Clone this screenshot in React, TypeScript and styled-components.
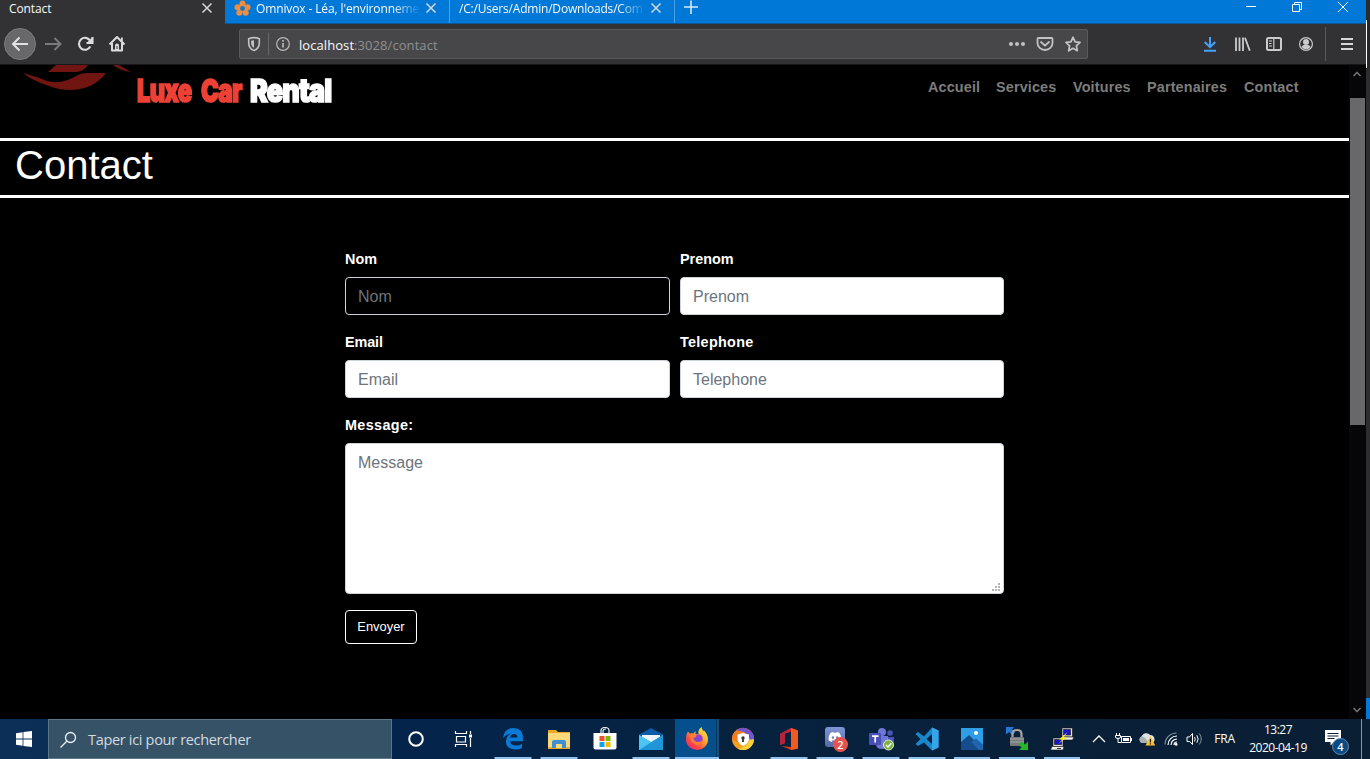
import React from "react";
import styled, { createGlobalStyle } from "styled-components";
import { FaDiscord } from "react-icons/fa";

const ui = `"Open Sans", "Noto Sans", sans-serif`;
const arial = `"Liberation Sans", Arial, sans-serif`;

const Global = createGlobalStyle`
  * { box-sizing: border-box; }
  body { margin: 0; background: #000; overflow: hidden; }
  svg { display: block; flex: none; }
`;

const Desktop = styled.div`
  width: 1370px;
  height: 759px;
  display: flex;
  flex-direction: column;
  overflow: hidden;
  background: #000;
`;

const Upper = styled.div`
  display: flex;
  height: 719px;
`;

const BrowserWindow = styled.div`
  width: 1366px;
  display: flex;
  flex-direction: column;
`;

const Behind = styled.div`
  width: 4px;
  display: flex;
  flex-direction: column;
  background: #2d2d2e;
`;

const BehindPart = styled.div<{ $h: number; $bg: string; $line?: boolean }>`
  height: ${(p) => p.$h}px;
  background: ${(p) => p.$bg};
  border-left: ${(p) => (p.$line ? "1px solid #fff" : "0")};
`;

/* ---------- Tabs ---------- */

const TabBar = styled.div`
  height: 24px;
  display: flex;
  background: #0078d7;
  border-bottom: 1px solid #0a5796;
`;

const Tab = styled.div<{ $active?: boolean }>`
  width: 225px;
  height: ${(p) => (p.$active ? 24 : 23)}px;
  display: flex;
  align-items: flex-start;
  padding: 0 12px 0 9px;
  background: ${(p) => (p.$active ? "#323234" : "transparent")};
  border-right: ${(p) => (p.$active ? "0" : "1px solid #4da0e3")};
`;

const TabLabel = styled.span<{ $fade?: boolean; $spacing?: number; $gap?: number }>`
  flex: 1;
  margin-left: ${(p) => p.$gap ?? 0}px;
  white-space: nowrap;
  font: 12px/18px ${ui};
  letter-spacing: ${(p) => p.$spacing ?? 0}px;
  color: #f9f9fa;
  mask-image: ${(p) => (p.$fade ? "linear-gradient(to left, transparent, #000 28px)" : "none")};
`;

const TabClose = styled.svg`
  margin: 2px 0 0 4px;
`;

const NewTab = styled.svg`
  margin: 0 0 0 9px;
`;

const WindowButtons = styled.div`
  margin-left: auto;
  display: flex;
`;

/* ---------- Toolbar ---------- */

const Toolbar = styled.div`
  height: 41px;
  display: flex;
  align-items: center;
  background: #323234;
  border-bottom: 1px solid #18181a;
`;

const NavButtons = styled.div`
  width: 239px;
  display: flex;
`;

const UrlBar = styled.div`
  width: 849px;
  height: 30px;
  display: flex;
  align-items: center;
  background: #474749;
  border: 1px solid #5a5a5c;
  border-radius: 2px;
`;

const UrlText = styled.span`
  flex: 1;
  font: 13px/20px ${ui};
  letter-spacing: 0.07px;
  padding-top: 1px;
  color: #8f8f92;
  b { font-weight: 400; color: #f9f9fa; }
`;

const ToolIcons = styled.div`
  margin-left: auto;
  display: flex;
`;

/* ---------- Page ---------- */

const Viewport = styled.div`
  flex: 1;
  display: flex;
`;

const Page = styled.main`
  width: 1349px;
  height: 654px;
  background: #000;
  overflow: hidden;
`;

const Header = styled.header`
  height: 73px;
  display: flex;
`;

const Brand = styled.div`
  display: flex;
  padding-top: 6px;
`;

const BrandWord = styled.span<{ $w: number; $scale: number; $color: string }>`
  width: ${(p) => p.$w}px;
  height: 40px;
  font: 900 32px/40px Inter, sans-serif;
  letter-spacing: -1px;
  white-space: nowrap;
  color: ${(p) => p.$color};
  -webkit-text-stroke: 1.6px ${(p) => p.$color};
  transform: scaleX(${(p) => p.$scale});
  transform-origin: 0 0;
`;

const Menu = styled.nav`
  margin-left: auto;
  padding: 13px 51px 0 0;
  display: flex;
  gap: 16px;
`;

const MenuLink = styled.a<{ $w: number }>`
  width: ${(p) => p.$w}px;
  white-space: nowrap;
  font: bold 14.4px/18px ${arial};
  letter-spacing: 0.15px;
  color: #7d7d7d;
`;

const Title = styled.h1`
  height: 60px;
  margin: 0;
  padding: 0 15px;
  border: solid #fff;
  border-width: 3px 0;
  font: 400 40px/48px ${arial};
  color: #fff;
`;

const Form = styled.form`
  width: 659px;
  margin: 50px 0 0 345px;
  display: flex;
  flex-direction: column;
  align-items: flex-start;
`;

const Row = styled.div`
  width: 100%;
  height: 83px;
  display: grid;
  grid-template-columns: 325px 324px;
  column-gap: 10px;
`;

const Field = styled.label`
  display: flex;
  flex-direction: column;
  width: 100%;
`;

const FieldLabel = styled.span<{ $spacing?: number }>`
  height: 29px;
  font: bold 14.4px/22px ${arial};
  letter-spacing: ${(p) => p.$spacing ?? 0}px;
  color: #fff;
`;

const Input = styled.input<{ $dark?: boolean }>`
  width: 100%;
  height: 38px;
  padding: 8px 12px 6px;
  font: 16px/24px ${arial};
  color: ${(p) => (p.$dark ? "#fff" : "#495057")};
  background: ${(p) => (p.$dark ? "#000" : "#fff")};
  border: 1px solid #ced4da;
  border-radius: 4px;
  outline: 0;
  &::placeholder { color: #6c757d; opacity: 1; }
`;

const AreaWrap = styled.div`
  position: relative;
  height: 151px;
`;

const Area = styled.textarea`
  display: block;
  width: 100%;
  height: 151px;
  padding: 7px 12px;
  resize: none;
  font: 16px/24px ${arial};
  background: #fff;
  border: 1px solid #ced4da;
  border-radius: 4px;
  outline: 0;
  &::placeholder { color: #6c757d; opacity: 1; }
`;

const Grip = styled.svg`
  position: absolute;
  right: 4px;
  bottom: 3px;
`;

const Submit = styled.button`
  width: 72px;
  height: 34px;
  margin-top: 16px;
  padding: 0 0 1px;
  font: 12.9px/20px ${arial};
  color: #fff;
  background: #000;
  border: 1px solid #fff;
  border-radius: 4px;
`;

const Scrollbar = styled.div`
  width: 17px;
  display: flex;
  flex-direction: column;
  align-items: center;
  background: #060608;
`;

const Thumb = styled.div`
  width: 15px;
  height: 327px;
  margin: 16px 0 auto;
  background: #68686a;
`;

/* ---------- Taskbar ---------- */

const Taskbar = styled.footer`
  height: 40px;
  display: flex;
  background: linear-gradient(90deg, #0b2f57 0, #04244c 400px, #06223f 720px, #09203a 1000px, #0a1f34 1366px);
`;

const StartButton = styled.div`
  width: 48px;
  display: grid;
  place-items: center;
`;

const SearchBox = styled.div`
  width: 344px;
  display: flex;
  align-items: center;
  gap: 11px;
  padding: 1px 0 0 10px;
  background: #355267;
  border: 1px solid #5d7688;
  font: 14.5px/20px ${ui};
  letter-spacing: -0.32px;
  color: #d3dbe1;
`;

const AppButton = styled.div<{ $w?: number; $active?: boolean }>`
  position: relative;
  width: ${(p) => p.$w ?? 46}px;
  display: grid;
  place-items: center;
  background: ${(p) =>
    p.$active
      ? "linear-gradient(90deg, transparent 1px, #064f8d 1px 42px, #053459 42px 43px, #174f7f 43px 45px, transparent 45px)"
      : "none"};
`;

const Underline = styled.div<{ $w?: number }>`
  position: absolute;
  bottom: 0;
  width: ${(p) => p.$w ?? 37}px;
  height: 2px;
  left: 50%;
  transform: translateX(-50%);
  background: #8fc2ee;
`;

const AppBadge = styled.span`
  position: absolute;
  left: 21px;
  top: 18px;
  width: 15px;
  height: 15px;
  border-radius: 50%;
  background: #e5534f;
  color: #fff;
  text-align: center;
  font: 600 11px/15px ${ui};
`;

const DiscordTile = styled.div`
  width: 20px;
  height: 20px;
  margin-bottom: 4px;
  display: grid;
  place-items: center;
  border-radius: 3px;
  color: #fff;
  background: linear-gradient(#7f95d5, #586aa5);
`;

const TrayCell = styled.div<{ $w: number }>`
  width: ${(p) => p.$w}px;
  display: grid;
  place-items: center;
  font: 12px/18px ${ui};
  letter-spacing: -0.25px;
  color: #fff;
`;

const Clock = styled.div`
  width: 70px;
  display: flex;
  flex-direction: column;
  align-items: center;
  padding-top: 2px;
  font: 12px/18px ${ui};
  letter-spacing: -0.5px;
  white-space: nowrap;
  color: #fff;
`;

const Notifications = styled.div`
  position: relative;
  width: 49px;
  padding: 11px 0 0 12px;
  border-right: 1px solid #8793a0;
`;

const Count = styled.span`
  position: absolute;
  left: 19px;
  top: 19px;
  width: 17px;
  height: 17px;
  border: 1px solid #5e8ab0;
  border-radius: 50%;
  background: #0a4b83;
  color: #fff;
  text-align: center;
  font: 600 11px/15px ${ui};
`;

const Cross = () => (
  <TabClose width="12" height="12" viewBox="0 0 12 12" stroke="#d8d8da" strokeWidth="1.5" fill="none">
    <path d="M1.5 1.5l9 9M10.5 1.5l-9 9" />
  </TabClose>
);

const Icon = ({ w = 28, h = 28, children }: { w?: number; h?: number; children: React.ReactNode }) => (
  <svg width={w} height={h} viewBox={`0 0 ${w} ${h}`} fill="none">{children}</svg>
);

const Tabs = () => (
  <TabBar>
    <Tab $active>
      <TabLabel $spacing={-0.1}>Contact</TabLabel>
      <Cross />
    </Tab>
    <Tab>
      <Icon w={17} h={18}>
        <g fill="#f28c3a">
          <circle cx="8.500" cy="3.600" r="3" />
          <circle cx="3.500" cy="7.200" r="3" />
          <circle cx="13.500" cy="7.200" r="3" />
          <circle cx="5.300" cy="12.700" r="3" />
          <circle cx="11.700" cy="12.700" r="3" />
        </g>
        <circle cx="8.500" cy="8.500" r="3.200" fill="#1976bd" stroke="#e0904f" strokeWidth="1.500" />
      </Icon>
      <TabLabel $fade $spacing={-0.12} $gap={5}>Omnivox - Léa, l'environneme</TabLabel>
      <Cross />
    </Tab>
    <Tab>
      <TabLabel $fade $spacing={-0.2}>/C:/Users/Admin/Downloads/Com</TabLabel>
      <Cross />
    </Tab>
    <NewTab width="14" height="15" viewBox="0 0 14 15" stroke="#d5e9f9" strokeWidth="1.6">
      <path d="M7 .5v13.500M0 7h14" />
    </NewTab>
    <WindowButtons>
      <Icon w={46} h={20}><path d="M16 6.500h10" stroke="#fff" /></Icon>
      <Icon w={46} h={20}><path d="M16.500 4.500h7v7h-7zM18.500 4.500v-2h7v7h-2" stroke="#fff" /></Icon>
      <Icon w={44} h={20}><path d="M16 2l10 10M26 2l-10 10" stroke="#fff" /></Icon>
    </WindowButtons>
  </TabBar>
);

const Tools = () => (
  <Toolbar>
    <NavButtons>
      <Icon w={38} h={38}>
        <circle cx="20" cy="19" r="15.500" fill="#68686a" stroke="#7c7c7e" />
        <path d="M28 19H13M19.500 12.500L13 19l6.500 6.500" stroke="#e2e2e4" strokeWidth="2" />
      </Icon>
      <Icon w={32} h={38}>
        <path d="M7 19h15.500M16.500 13l6 6-6 6" stroke="#7a7a7c" strokeWidth="2" />
      </Icon>
      <Icon w={32} h={38}>
        <path d="M20.300 21.600A6 6 0 1 1 20 15.500M22.500 12v6h-6" stroke="#dcdcde" strokeWidth="2.100" />
        <path d="M22.500 12v6h-6z" fill="#dcdcde" />
      </Icon>
      <Icon w={32} h={38}>
        <path d="M7.500 19.500L15 12l7.500 7.500M10 18v7.500h10V18" stroke="#dcdcde" strokeWidth="2" strokeLinejoin="round" />
        <path d="M13 26v-5.500q0-2 2-2t2 2V26z" fill="#dcdcde" />
        <path d="M14.500 21h1v3h-1z" fill="#323234" />
        <path d="M19 12.500h1.800v4H19z" fill="#dcdcde" />
      </Icon>
    </NavButtons>
    <UrlBar>
      <Icon w={28} h={28}>
        <path d="M8.700 8.700Q14 6.600 19.300 8.700V13q0 5.500-5.300 7.500-5.300-2-5.300-7.500z" stroke="#c2c2c4" strokeWidth="1.600" />
        <path d="M14 10.200v7.600q-2.900-1.500-2.900-5v-2z" fill="#c2c2c4" />
      </Icon>
      <Icon w={31} h={28}>
        <path d="M.5 3v22" stroke="#68686a" />
        <circle cx="15" cy="14" r="6.300" stroke="#b8b8ba" strokeWidth="1.200" />
        <path d="M15 13v4.500M15 10v1.700" stroke="#b8b8ba" strokeWidth="1.700" />
      </Icon>
      <UrlText><b>localhost</b>:3028/contact</UrlText>
      <Icon w={83} h={28}>
        <g fill="#c2c2c4">
          <circle cx="7" cy="14" r="2" /><circle cx="13" cy="14" r="2" /><circle cx="19" cy="14" r="2" />
        </g>
        <path d="M34.500 8h13q1 0 1 1v4a7.500 7 0 0 1-15 0V9q0-1 1-1zM37 12l4 3.700L45 12" stroke="#c2c2c4" strokeWidth="1.800" strokeLinecap="round" strokeLinejoin="round" />
        <path d="M69 7.300l2.100 4.500 4.900.6-3.600 3.400.9 4.900L69 18.300l-4.300 2.400.9-4.900-3.600-3.400 4.900-.6z" stroke="#c2c2c4" strokeWidth="1.800" strokeLinejoin="round" />
      </Icon>
    </UrlBar>
    <ToolIcons>
      <Icon w={32} h={38}>
        <path d="M16 12v9M10.700 17l5.300 5.200 5.300-5.200M10 25.700h12" stroke="#45a1ff" strokeWidth="2" />
      </Icon>
      <Icon w={32} h={38}>
        <path d="M10 12.500V26M13.500 12.500V26M17 12.500V26M19 12.800l4.800 13" stroke="#cbcbcd" strokeWidth="1.800" />
      </Icon>
      <Icon w={32} h={38}>
        <rect x="9" y="13" width="14" height="12" rx="1.500" stroke="#cbcbcd" strokeWidth="2" />
        <path d="M15.800 13v12M11 16h3M11 18.500h2.500M11 21h3" stroke="#cbcbcd" strokeWidth="1.200" />
      </Icon>
      <Icon w={34} h={38}>
        <circle cx="16" cy="19" r="6.400" stroke="#cbcbcd" strokeWidth="1.200" />
        <circle cx="16" cy="17" r="3" fill="#cbcbcd" />
        <path d="M11.500 22q1-2 2.500-2h4q1.500 0 2.500 2-2 2.300-4.500 2.300T11.500 22z" fill="#cbcbcd" />
      </Icon>
      <Icon w={42} h={38}>
        <path d="M1.500 2v34" stroke="#59595b" />
        <path d="M17 14h12M17 19h12M17 24h12" stroke="#d6d6d8" strokeWidth="2" />
      </Icon>
    </ToolIcons>
  </Toolbar>
);

const ContactPage = () => (
  <Page>
    <Header>
      <Icon w={137} h={40}>
        <g fill="#701512">
          <path d="M23 8Q35 11 47 16Q62 20 78 10Q82 8 86 8H106Q99 17 90 21Q70 29 49 21Q33 16 23 8z" />
          <path d="M56 0H88Q84 6 77 7H48z" />
          <path d="M113 0H119L131 7Q121 6 113 0z" />
        </g>
      </Icon>
      <Brand>
        <BrandWord $w={64} $scale={0.745} $color="#ee4136">Luxe</BrandWord>
        <BrandWord $w={49} $scale={0.755} $color="#ee4136">Car</BrandWord>
        <BrandWord $w={84} $scale={0.84} $color="#fff">Rental</BrandWord>
      </Brand>
      <Menu>
        <MenuLink $w={52}>Accueil</MenuLink>
        <MenuLink $w={61}>Services</MenuLink>
        <MenuLink $w={58}>Voitures</MenuLink>
        <MenuLink $w={81}>Partenaires</MenuLink>
        <MenuLink $w={54}>Contact</MenuLink>
      </Menu>
    </Header>
    <Title>Contact</Title>
    <Form>
      <Row>
        <Field><FieldLabel>Nom</FieldLabel><Input $dark placeholder="Nom" /></Field>
        <Field><FieldLabel>Prenom</FieldLabel><Input placeholder="Prenom" /></Field>
      </Row>
      <Row>
        <Field><FieldLabel $spacing={-0.1}>Email</FieldLabel><Input placeholder="Email" /></Field>
        <Field><FieldLabel $spacing={0.3}>Telephone</FieldLabel><Input placeholder="Telephone" /></Field>
      </Row>
      <Field>
        <FieldLabel $spacing={0.35}>Message:</FieldLabel>
        <AreaWrap>
          <Area placeholder="Message" />
          <Grip width="8" height="8" viewBox="0 0 8 8" fill="#b4b4b4">
            <path d="M6 0h2v2H6zM3 3h2v2H3zM6 3h2v2H6zM0 6h2v2H0zM3 6h2v2H3zM6 6h2v2H6z" />
          </Grip>
        </AreaWrap>
      </Field>
      <Submit type="button">Envoyer</Submit>
    </Form>
  </Page>
);

const Edge = () => (
  <Icon>
    <path d="M4 13Q5 3 14.500 3 24 3.200 24 13v3.200H11.200Q11.700 20.500 17 20.500q3.500 0 6-1.500v4q-3 1.500-7 1.500Q7 24 7 16.500 7 11 12 8.500 7 9 4 13zM11.200 12.500h7.200Q18.300 9 15 9t-3.800 3.500z" fill="#0b79d6" fillRule="evenodd" />
  </Icon>
);

const Explorer = () => (
  <Icon>
    <path d="M3 5h8l2 2h12v17H3z" fill="#e9a825" />
    <path d="M3 8h22v15H3z" fill="#fbd978" />
    <path d="M7 23v-6q0-2 2-2h10q2 0 2 2v6h-4v-4h-6v4z" fill="#3f8fd2" />
    <path d="M3 22h4v1H3zM21 22h4v1h-4z" fill="#e3b64b" />
  </Icon>
);

const Store = () => (
  <Icon>
    <path d="M10 8V5.500Q10 2.500 14 2.500T18 5.500V8M12 8V6q0-2 3-2" stroke="#fff" strokeWidth="1.100" />
    <path d="M2.500 8h23v14.500q0 2-2 2h-19q-2 0-2-2z" fill="#fff" />
    <path d="M8.500 11H13.500V16H8.500z" fill="#f04e23" />
    <path d="M14.500 11H19.500V16H14.500z" fill="#7eb900" />
    <path d="M8.500 17H13.500V22H8.500z" fill="#12a2ea" />
    <path d="M14.500 17H19.500V22H14.500z" fill="#fbb800" />
  </Icon>
);

const Mail = () => (
  <Icon>
    <path d="M2 9.500L14 3l12 6.500V13H2z" fill="#0c5ca8" />
    <path d="M5 10h18v8H5z" fill="#f1f4f6" />
    <path d="M2 10l12 7 12-7v15H2z" fill="#31b4ec" />
    <path d="M26 10v15H2z" fill="#1e96d8" />
    <path d="M2 25V10l12 7z" fill="#4cc5f3" />
  </Icon>
);

const Firefox = () => (
  <Icon>
    <defs>
      <linearGradient id="ff" x1="24" y1="3" x2="5" y2="25" gradientUnits="userSpaceOnUse">
        <stop stopColor="#fff04a" /><stop offset=".4" stopColor="#ffa52d" />
        <stop offset=".7" stopColor="#ff4a41" /><stop offset="1" stopColor="#e6207d" />
      </linearGradient>
      <linearGradient id="ffp" x1="18" y1="10" x2="12" y2="19" gradientUnits="userSpaceOnUse">
        <stop stopColor="#a03bd8" /><stop offset="1" stopColor="#6a4bd0" />
      </linearGradient>
    </defs>
    <path d="M5 6.500Q6 8 7 8.500q2-.5 3.500 0L12.500 6v3h3q-1-4 3-7 .5 3 2.500 4.500Q21 6 20.500 5 25 9 25 14.500A11 10.500 0 0 1 3 14.500Q3 9 5 6.500z" fill="url(#ff)" />
    <circle cx="15" cy="14" r="4.800" fill="url(#ffp)" />
    <path d="M7 11q3-2.500 7-.5-1 2-3.500 2.500.5 4 5 4 3 0 4.500-3 0 6-6 6-6.500-1-7-9z" fill="#ff7a35" />
  </Icon>
);

const PrivateBrowser = () => (
  <Icon>
    <circle cx="14" cy="14" r="11" fill="#f5a11f" />
    <path d="M7 5.500A11 11 0 0 1 25 14q0 2-1 4L15 7z" fill="#7553ca" />
    <path d="M25 14A11 11 0 0 1 9 23.800q8-1 12-9z" fill="#fbd13b" />
    <path d="M3 14A11 11 0 0 1 8 5l5 3-3 10z" fill="#f47a20" />
    <path d="M8.500 9.500L14 8l6 1.500V14q0 4-6 7-5.500-3-5.500-7z" fill="#fff" />
    <circle cx="14" cy="13" r="1.700" fill="#34363c" /><path d="M13.400 13h1.200l.5 4h-2.200z" fill="#34363c" />
  </Icon>
);

const Office = () => (
  <Icon>
    <path d="M5 9l11-6 7 2.500v18L16 25 6.500 21l9.500 1V6.500l-6 2V18l-5 2z" fill="#db3a16" />
    <path d="M5 9l11-6v3.500l-6 2V18l-5 2z" fill="#b7233c" />
    <path d="M16 3l7 2.500v18L16 25z" fill="#f15a1e" />
  </Icon>
);

const Teams = () => (
  <Icon>
    <circle cx="15" cy="7" r="4" fill="#6f76d6" />
    <circle cx="23" cy="8" r="2.800" fill="#4b53bc" />
    <path d="M18 12h9v6q0 4-4.500 4T18 18z" fill="#4b53bc" />
    <path d="M9 11h12v8q0 5-6 5t-6-5z" fill="#6f76d6" />
    <rect x="2" y="8" width="12" height="12" rx="1" fill="#4850b8" />
    <path d="M5 11.200h6.500M8.200 11v6.500" stroke="#fff" strokeWidth="1.700" />
    <circle cx="21.500" cy="20" r="5" fill="#7cb342" stroke="#e3efd6" />
    <path d="M19 20l2 2 3.300-3.700" stroke="#fff" strokeWidth="1.500" />
  </Icon>
);

const VsCode = () => (
  <Icon>
    <path d="M19 2.500l6.500 3v17l-6.500 3-8-8L5 21l-2.500-2 5-5-5-5L5 7l6 4.500zM19 9l-5.500 5 5.500 5z" fill="#1b87cb" fillRule="evenodd" />
    <path d="M19 2.500l6.500 3v17l-6.500 3z" fill="#36a4e8" />
  </Icon>
);

const Photos = () => (
  <Icon>
    <path d="M3 3h22v22H3z" fill="#2e9fe6" />
    <path d="M3 17l8-7 14 14v1H3z" fill="#164b8c" />
    <path d="M13 17l5-3.500 7 6V25h-4z" fill="#2066ac" />
    <circle cx="18" cy="8" r="2" fill="#fff" />
  </Icon>
);

const LockArrows = () => (
  <Icon>
    <path d="M3 2h8L9 4.500l3 3L9 10 6 7l-3 2.500z" fill="#2578d4" />
    <path d="M9.500 13V9q0-4 4.500-4t4.500 4v4" stroke="#a5a5a5" strokeWidth="2.200" />
    <rect x="7" y="12" width="14" height="9" rx="1" fill="#77797a" />
    <path d="M7 14h14M7 17h14" stroke="#aaa" />
    <path d="M25 25h-9l2.500-2.500-3-3.500 3-2.500 3.500 3 3-3z" fill="#27b52c" />
  </Icon>
);

const Terminals = () => (
  <Icon>
    <g stroke="#111" strokeWidth=".6">
      <path d="M14 3h10.500v9H14z" fill="#dcdcdc" /><path d="M15.500 4.500h7V10h-7z" fill="#1414c8" />
      <path d="M14 12h12l-1.500 3H13z" fill="#eee" />
      <path d="M5 13h10v8.500H5z" fill="#dcdcdc" /><path d="M6.500 14.500h7v5h-7z" fill="#1414c8" />
      <path d="M4 21.500h12L15 25H2.500z" fill="#eee" />
    </g>
    <path d="M9 23.500h4" stroke="#333" />
    <path d="M19.500 7L11 14.500h3.500L10 19l9-6.500h-3.500z" fill="#ffee22" />
  </Icon>
);

const TaskbarView = () => (
  <Taskbar>
    <StartButton>
      <svg width="16" height="16" viewBox="0 0 16 16" fill="#fff">
        <path d="M0 2.200L6.600 1.200V7.600H0zM7.400 1.100L16 0V7.600H7.400zM0 8.400H6.600V14.800L0 13.800zM7.400 8.400H16V16L7.400 14.900z" />
      </svg>
    </StartButton>
    <SearchBox>
      <svg width="18" height="18" viewBox="0 0 18 18" fill="none" stroke="#edf2f5" strokeWidth="1.300">
        <circle cx="11.500" cy="6.500" r="5" /><path d="M8 10l-6.500 6.500" />
      </svg>
      Taper ici pour rechercher
    </SearchBox>
    <AppButton $w={48}>
      <Icon><circle cx="14" cy="14" r="6.800" stroke="#fff" strokeWidth="2" /></Icon>
    </AppButton>
    <AppButton $w={50}>
      <Icon>
        <path d="M4.500 6v2.500h11V6M4.500 22v-2.500h11V22M5.500 11.500h9v5.500h-9zM19.500 6v3M19.500 13v9" stroke="#fff" strokeWidth="1.200" />
        <path d="M18 9.500h3v3h-3z" fill="#fff" />
      </Icon>
    </AppButton>
    <AppButton><Edge /><Underline /></AppButton>
    <AppButton><Explorer /><Underline /></AppButton>
    <AppButton><Store /></AppButton>
    <AppButton><Mail /><Underline /></AppButton>
    <AppButton $active><Firefox /><Underline $w={44} /></AppButton>
    <AppButton><PrivateBrowser /></AppButton>
    <AppButton><Office /><Underline /></AppButton>
    <AppButton>
      <DiscordTile><FaDiscord size={14} /></DiscordTile>
      <AppBadge>2</AppBadge>
      <Underline />
    </AppButton>
    <AppButton><Teams /><Underline /></AppButton>
    <AppButton><VsCode /><Underline /></AppButton>
    <AppButton $w={44}><Photos /><Underline $w={36} /></AppButton>
    <AppButton $w={45}><LockArrows /><Underline $w={36} /></AppButton>
    <AppButton $w={45}><Terminals /><Underline $w={36} /></AppButton>
    <TrayCell $w={29}>
      <Icon w={14} h={10}><path d="M1 8l6-6 6 6" stroke="#fff" strokeWidth="1.300" /></Icon>
    </TrayCell>
    <TrayCell $w={21}>
      <Icon w={18} h={14}>
        <path d="M6.500 4.500h9v6h-9zM16.500 6v3" stroke="#fff" />
        <path d="M8 6h6v3H8z" fill="#fff" />
        <path d="M1.500 1v2M4.500 1v2M.5 3.500h5V5q0 1.500-2.500 1.500T.5 5zM3 6v4.500h3" stroke="#fff" />
      </Icon>
    </TrayCell>
    <TrayCell $w={25}>
      <Icon w={18} h={16}>
        <path d="M4 12a3.500 3.500 0 0 1-.5-6.500A5 5 0 0 1 12 4q4 0 4.500 4 0 4-3 4z" fill="#dfe2e4" />
        <path d="M4 12a3.500 3.500 0 0 1-.5-6.500Q6 5 8 8l3 4z" fill="#a9afb3" />
        <path d="M12.500 5l4.700 9.500H7.500z" fill="#fbc02d" />
        <path d="M12.400 8v3.500M12.400 12.300v1.200" stroke="#222" strokeWidth="1.200" />
      </Icon>
    </TrayCell>
    <TrayCell $w={24}>
      <Icon w={14} h={14}>
        <path d="M1 12.500A11.500 11.500 0 0 1 12.500 1" stroke="#8894a0" strokeWidth="1.100" />
        <path d="M4 13A9 9 0 0 1 13 4M7 13a6 6 0 0 1 6-6M10 13a3 3 0 0 1 3-3" stroke="#fff" strokeWidth="1.200" />
        <circle cx="12.200" cy="12.400" r="1.300" fill="#fff" />
      </Icon>
    </TrayCell>
    <TrayCell $w={23}>
      <Icon w={17} h={14}>
        <path d="M1 5h2.500l3-3.500v11L3.500 9.500H1z" stroke="#fff" />
        <path d="M8.500 5q1.500 2 0 4.500M10.800 3.300q2.800 3.700 0 7.500" stroke="#fff" />
        <path d="M13.300 1.500q4 5.500 0 11" stroke="#8894a0" />
      </Icon>
    </TrayCell>
    <TrayCell $w={37}>FRA</TrayCell>
    <Clock><span>13:27</span><span>2020-04-19</span></Clock>
    <Notifications>
      <svg width="17" height="17" viewBox="0 0 17 17">
        <path d="M0 0h16v12H9l-3.500 3.500V12H0z" fill="#fff" />
        <path d="M2.500 3.500h11M2.500 6h11M2.500 8.500h7" stroke="#0b2036" />
      </svg>
      <Count>4</Count>
    </Notifications>
  </Taskbar>
);

export default function App() {
  return (
    <Desktop>
      <Global />
      <Upper>
        <BrowserWindow>
          <Tabs />
          <Tools />
          <Viewport>
            <ContactPage />
            <Scrollbar>
              <Icon w={15} h={17}><path d="M3.500 11L7 7.500l3.500 3.500" stroke="#77777a" strokeWidth="1.500" /></Icon>
              <Thumb />
              <Icon w={15} h={17}><path d="M3.500 6L7 9.500 10.500 6" stroke="#77777a" strokeWidth="1.500" /></Icon>
            </Scrollbar>
          </Viewport>
        </BrowserWindow>
        <Behind>
          <BehindPart $h={20} $bg="#2b2b2c" />
          <BehindPart $h={48} $bg="#262627" $line />
          <BehindPart $h={630} $bg="#2d2d2e" />
          <BehindPart $h={21} $bg="#0078d7" />
        </Behind>
      </Upper>
      <TaskbarView />
    </Desktop>
  );
}
